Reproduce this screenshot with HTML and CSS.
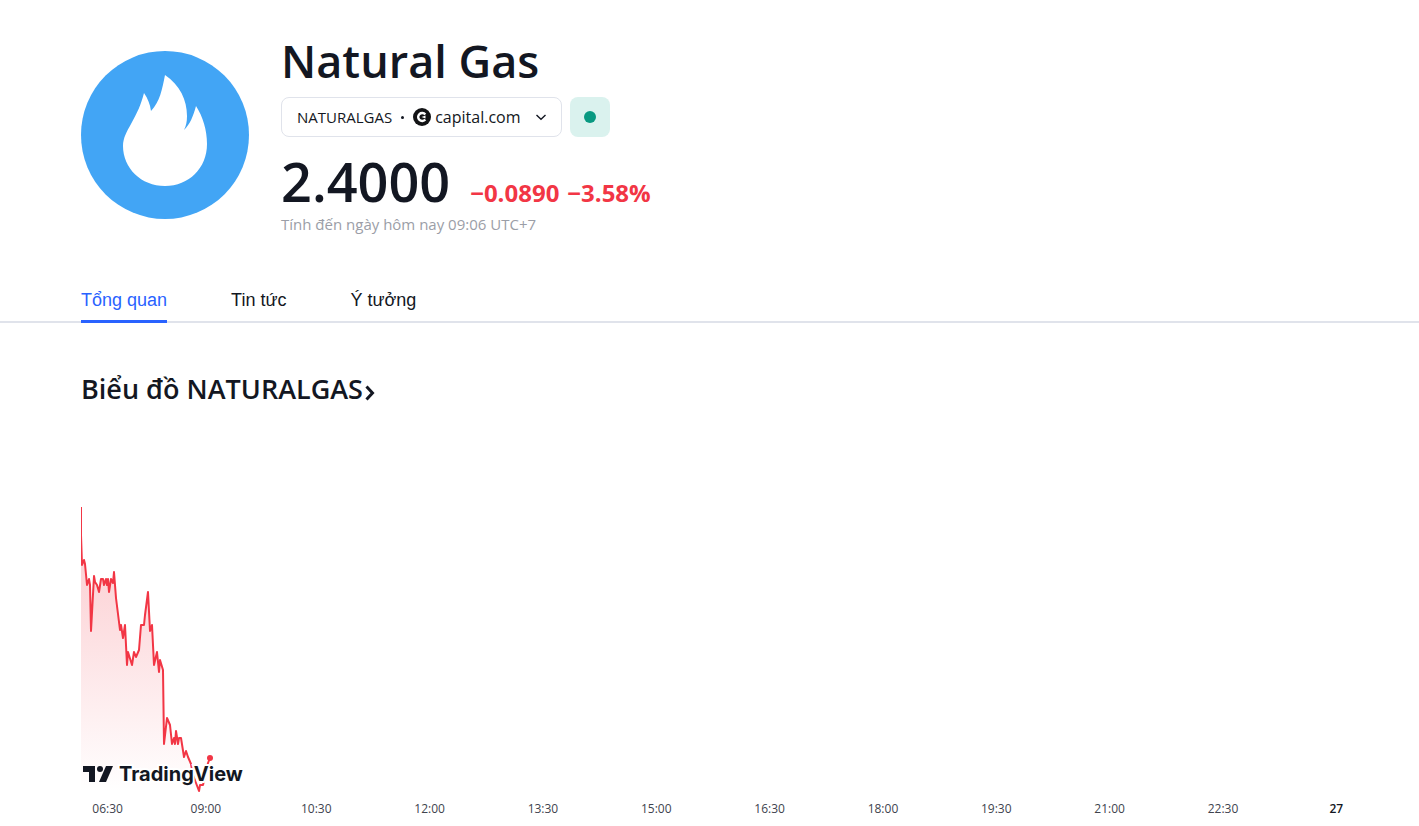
FILE: index.html
```html
<!DOCTYPE html>
<html lang="vi">
<head>
    <meta charset="UTF-8">
    <meta name="viewport" content="width=device-width, initial-scale=1.0">
    <title>Natural Gas</title>
    <link rel="stylesheet" href="styles.css">
</head>
<body>
    <header class="symbol-header">
        <svg class="symbol-logo" viewBox="0 0 168 168" aria-hidden="true">
            <circle cx="84" cy="84" r="84" fill="#42a5f5"/>
            <path d="M84 24C99 34 106 49 106 65C106 71 105 75 103 79C109 73 112 66 115 55C122 66 126 79 126 93C126 117 108 135 84 135C60 135 42 117 42 95C42 87 46 80 50 73C56 62 60 54 63 42C67 48 69 53 70 60C79 50 81 39 84 24Z" fill="#fff"/>
        </svg>
        <div class="symbol-info">
            <h1>Natural Gas</h1>
            <div class="symbol-row">
                <button class="exchange-btn">
                    <span>NATURALGAS</span>
                    <span class="dot-sep"></span>
                    <svg class="exchange-logo" viewBox="0 0 18 18" aria-hidden="true">
                        <circle cx="9" cy="9" r="9" fill="#131416"/>
                        <path d="M12.300 6.500A4 4 0 1 0 12.300 11.500" fill="none" stroke="#fff" stroke-width="2.4"/>
                        <path d="M8.500 9L12.500 7.500V10.500Z" fill="#fff"/>
                    </svg>
                    <span class="exchange-name">capital.com</span>
                    <svg class="arrow-down" viewBox="0 0 12 12" aria-hidden="true">
                        <path d="M1.5 4L6 8.2L10.500 4" fill="none" stroke="#131722" stroke-width="1.4"/>
                    </svg>
                </button>
                <button class="status-btn" aria-label="Thị trường mở cửa"><span class="status-dot"></span></button>
            </div>
            <div class="price-row">
                <span class="price">2.4000</span>
                <span class="change">−0.0890</span>
                <span class="change">−3.58%</span>
            </div>
            <p class="price-time">Tính đến ngày hôm nay 09:06 UTC+7</p>
        </div>
    </header>

    <nav class="tabs">
        <a href="#overview" class="tab active">Tổng quan</a>
        <a href="#news" class="tab">Tin tức</a>
        <a href="#ideas" class="tab">Ý tưởng</a>
    </nav>

    <main id="overview">
        <h2>
            <a href="#chart">Biểu đồ NATURALGAS<svg class="arrow-right" viewBox="0 0 10 16" aria-hidden="true"><path d="M1.500 1.500L7.500 8L1.500 14.500" fill="none" stroke="#131722" stroke-width="3"/></svg></a>
        </h2>
        <div class="chart" id="chart">
            <svg class="chart-line" viewBox="0 0 140 296" aria-hidden="true">
                <defs>
                    <linearGradient id="area" x1="0" y1="0" x2="0" y2="1">
                        <stop offset="0" stop-color="#f23645" stop-opacity="0.28"/>
                        <stop offset="1" stop-color="#f23645" stop-opacity="0"/>
                    </linearGradient>
                </defs>
                <path fill="url(#area)" d="M0 7L0 35L1 65L3 60L4 64L6 85L8 79L9 85L10 131L13 76L14 82L16 85L18 92L20 79L22 79L23 85L25 79L26 85L27 79L28 92L30 79L32 83L33 72L35 98L39 130L40 125L42 138L44 125L46 165L47 152L51 165L53 152L55 157L58 150L60 125L63 125L64 115L67 92L69 131L71 125L73 165L76 152L78 172L79 160L82 170L83 244L86 218L89 225L91 244L93 238L94 244L95 231L97 244L98 238L100 238L103 257L105 251L107 257L110 264L112 264L118 291L122 285L127 263L129 258V292H0Z"/>
                <path fill="none" stroke="#f23645" stroke-width="2" stroke-linejoin="round" d="M0 7L0 35L1 65L3 60L4 64L6 85L8 79L9 85L10 131L13 76L14 82L16 85L18 92L20 79L22 79L23 85L25 79L26 85L27 79L28 92L30 79L32 83L33 72L35 98L39 130L40 125L42 138L44 125L46 165L47 152L51 165L53 152L55 157L58 150L60 125L63 125L64 115L67 92L69 131L71 125L73 165L76 152L78 172L79 160L82 170L83 244L86 218L89 225L91 244L93 238L94 244L95 231L97 244L98 238L100 238L103 257L105 251L107 257L110 264L112 275L118 291L119 285L122 285L127 263L129 258"/>
                <circle cx="129" cy="258" r="3" fill="#f23645"/>
            </svg>
            <a href="#tradingview" class="watermark">
                <svg class="tv-logo" viewBox="0 0 30 16" aria-hidden="true">
                    <path d="M0 0H12V16H6V6H0Z"/>
                    <circle cx="17" cy="3" r="3"/>
                    <path d="M23 0H30L23 16H16Z"/>
                </svg>
                <span>TradingView</span>
            </a>
        </div>
        <div class="time-axis">
            <span>06:30</span>
            <span>09:00</span>
            <span>10:30</span>
            <span>12:00</span>
            <span>13:30</span>
            <span>15:00</span>
            <span>16:30</span>
            <span>18:00</span>
            <span>19:30</span>
            <span>21:00</span>
            <span>22:30</span>
            <span class="day">27</span>
        </div>
    </main>
</body>
</html>
```
FILE: styles.css
```css
* {
    box-sizing: border-box;
}
body {
    margin: 0;
    font-family: 'Open Sans', 'Noto Sans', sans-serif;
    background-color: #fff;
    color: #131722;
}
h1, h2, p {
    margin: 0;
}
a {
    color: inherit;
    text-decoration: none;
}
button {
    padding: 0;
    border: none;
    font-family: inherit;
    color: inherit;
    cursor: pointer;
}
.symbol-header {
    display: flex;
    gap: 32px;
    padding: 33px 81px 0;
}
.symbol-logo {
    flex: none;
    width: 168px;
    height: 168px;
    margin-top: 18px;
}
h1 {
    font-size: 45px;
    font-weight: 650;
    line-height: 56px;
}
.symbol-row {
    display: flex;
    gap: 8px;
    margin-top: 8px;
}
.exchange-btn {
    display: flex;
    align-items: center;
    height: 40px;
    padding: 0 14px 0 15px;
    border: 1px solid #e0e3eb;
    border-radius: 8px;
    background-color: #fff;
    font-size: 15px;
}
.dot-sep {
    width: 3px;
    height: 3px;
    margin: 0 9px;
    border-radius: 50%;
    background-color: #131722;
}
.exchange-logo {
    width: 18px;
    height: 18px;
    margin-right: 4px;
}
.exchange-name {
    font-size: 16px;
}
.arrow-down {
    width: 12px;
    height: 12px;
    margin-left: 14px;
}
.status-btn {
    display: flex;
    align-items: center;
    justify-content: center;
    width: 40px;
    height: 40px;
    border-radius: 8px;
    background-color: #daf2ee;
}
.status-dot {
    width: 12px;
    height: 12px;
    border-radius: 50%;
    background-color: #089981;
}
.price-row {
    display: flex;
    align-items: baseline;
    gap: 8px;
    margin-top: 20px;
}
.price {
    margin-right: 12px;
    font-size: 54px;
    font-weight: 650;
    line-height: 48px;
}
.change {
    font-size: 24px;
    font-weight: 700;
    line-height: 24px;
    color: #f23645;
}
.price-time {
    margin-top: 9px;
    font-size: 15px;
    line-height: 20px;
    color: #9b9ea7;
}
.tabs {
    display: flex;
    gap: 64px;
    margin-top: 45px;
    padding: 0 81px;
    border-bottom: 2px solid #e0e3eb;
}
.tab {
    height: 44px;
    margin-bottom: -2px;
    font-family: 'Liberation Sans', Arial, sans-serif;
    font-size: 18px;
    line-height: 42px;
}
.tab.active {
    border-bottom: 3px solid #2962ff;
    color: #2962ff;
}
h2 {
    padding: 48px 81px 0;
    font-size: 27px;
    font-weight: 600;
    line-height: 36px;
}
.arrow-right {
    width: 10px;
    height: 16px;
    margin-left: 2px;
    vertical-align: -2px;
}
.chart {
    position: relative;
    margin: 93px 81px 0;
}
.chart-line {
    display: block;
    width: 140px;
    height: 296px;
}
.watermark {
    position: absolute;
    left: 2px;
    bottom: 10px;
    display: flex;
    align-items: center;
    gap: 6px;
    font-family: 'Inter', sans-serif;
    font-size: 20px;
    font-weight: 700;
    line-height: 24px;
    -webkit-text-stroke: 4px #fff;
    paint-order: stroke fill;
}
.tv-logo {
    width: 30px;
    height: 16px;
    fill: #131722;
}
.time-axis {
    display: grid;
    grid-template-columns: 89fr 107fr repeat(10, 113fr);
    margin: 4px 26px 0 63px;
    font-size: 12px;
    line-height: 18px;
    text-align: center;
    color: #40434e;
}
.day {
    font-weight: 600;
    color: #131722;
}
```
